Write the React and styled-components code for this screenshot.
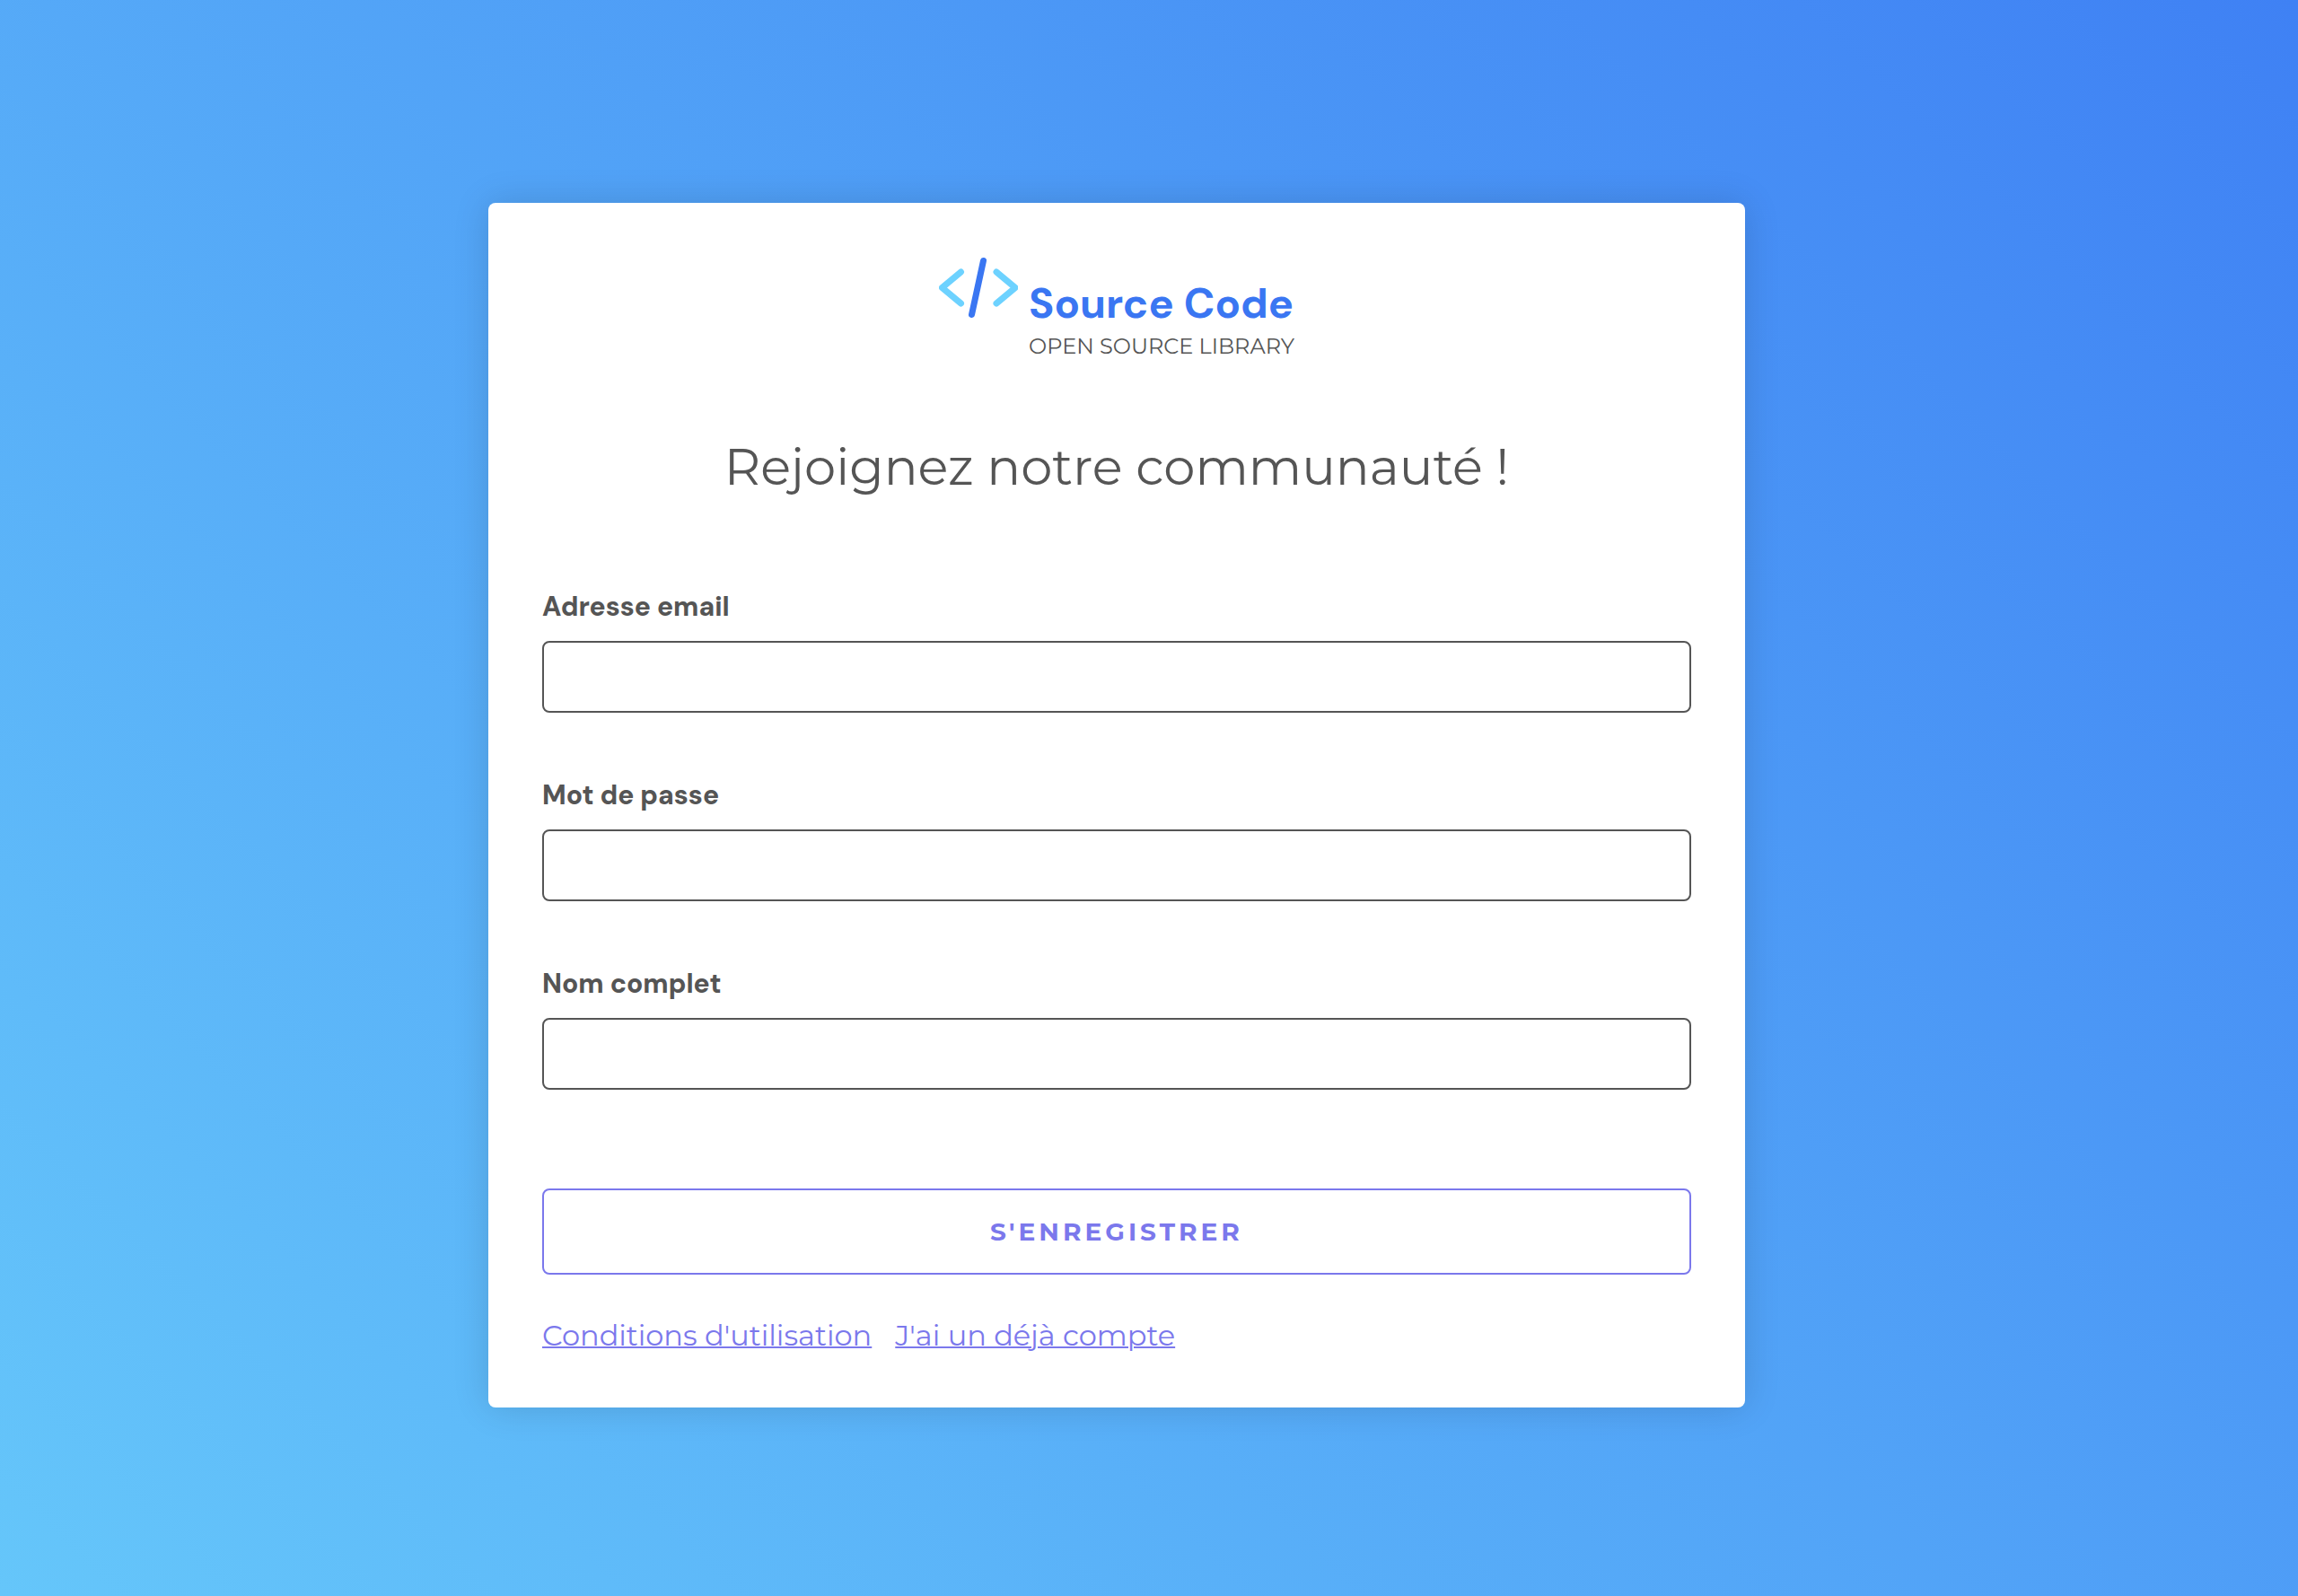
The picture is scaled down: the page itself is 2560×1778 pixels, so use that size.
import React, { useId } from "react";
import styled, { createGlobalStyle } from "styled-components";

const ink = "#555555";
const violet = "#7b78ec";
const blue = "#3a76f2";
const sky = "#6dd2ff";
const displayFont = `"Circular Std", "DM Sans", Inter, sans-serif`;

const GlobalStyle = createGlobalStyle`
  *, *::before, *::after { box-sizing: border-box; }
  body {
    margin: 0;
    color: ${ink};
    font-family: Montserrat, Inter, sans-serif;
  }
`;

const Page = styled.main`
  display: flex;
  justify-content: center;
  align-items: flex-start;
  min-height: 100vh;
  padding: 226px 72px 72px 0;
  background: linear-gradient(45deg, #65c6fa, #3f81f4);
`;

const Card = styled.section`
  width: 100%;
  max-width: 1400px;
  padding: 60px;
  border-radius: 8px;
  background: #ffffff;
  box-shadow: 0 0 40px rgba(0, 0, 0, 0.14);
`;

const Logo = styled.div`
  display: flex;
  justify-content: center;
  align-items: flex-start;
  gap: 12px;
`;

const LogoMark = styled.svg`
  flex: none;
  width: 88px;
  height: 70px;
`;

const LogoText = styled.div`
  display: flex;
  flex-direction: column;
  padding-top: 22px;
`;

const LogoName = styled.span`
  color: ${blue};
  font-family: ${displayFont};
  font-size: 47px;
  font-weight: 700;
  line-height: 60px;
`;

const LogoTagline = styled.span`
  font-size: 24px;
  font-weight: 400;
  line-height: 36px;
`;

const Title = styled.h1`
  margin: 74px 0 0;
  font-size: 56px;
  font-weight: 400;
  line-height: 84px;
  text-align: center;
`;

const Form = styled.form`
  display: flex;
  flex-direction: column;
  gap: 72px;
  margin-top: 94px;
`;

const FieldBox = styled.div`
  display: flex;
  flex-direction: column;
  gap: 18px;
`;

const Label = styled.label`
  font-family: ${displayFont};
  font-size: 30px;
  font-weight: 800;
  line-height: 40px;
`;

const Input = styled.input`
  width: 100%;
  height: 80px;
  padding: 0 20px;
  border: 2px solid ${ink};
  border-radius: 8px;
  background: #ffffff;
  color: inherit;
  font: inherit;
  font-size: 32px;
`;

const Submit = styled.button`
  height: 96px;
  margin-top: 38px;
  border: 2px solid ${violet};
  border-radius: 8px;
  background: #ffffff;
  color: ${violet};
  font-family: inherit;
  font-size: 28px;
  font-weight: 700;
  letter-spacing: 4px;
  text-transform: uppercase;
  cursor: pointer;
`;

const Links = styled.nav`
  display: flex;
  flex-wrap: wrap;
  gap: 26px;
  margin-top: 48px;
`;

const TextLink = styled.a`
  color: ${violet};
  font-size: 32px;
  line-height: 40px;
  text-decoration-thickness: 2px;
`;

function Field({ label, type }) {
  const id = useId();
  return (
    <FieldBox>
      <Label htmlFor={id}>{label}</Label>
      <Input id={id} type={type} />
    </FieldBox>
  );
}

export default function App() {
  return (
    <>
      <GlobalStyle />
      <Page>
        <Card>
          <Logo>
            <LogoMark viewBox="0 0 88 70" fill="none" strokeWidth="7" strokeLinecap="round" strokeLinejoin="round" aria-hidden="true">
              <path d="M24.500 17 3.500 34.500l21 17.500M64 17l21 17.500L64 52" stroke={sky} />
              <path d="M49.500 4.500 36.500 64.500" stroke={blue} />
            </LogoMark>
            <LogoText>
              <LogoName>Source Code</LogoName>
              <LogoTagline>OPEN SOURCE LIBRARY</LogoTagline>
            </LogoText>
          </Logo>
          <Title>Rejoignez notre communauté !</Title>
          <Form onSubmit={(event) => event.preventDefault()}>
            <Field label="Adresse email" type="email" />
            <Field label="Mot de passe" type="password" />
            <Field label="Nom complet" type="text" />
            <Submit type="submit">S'enregistrer</Submit>
          </Form>
          <Links>
            <TextLink href="#conditions">Conditions d'utilisation</TextLink>
            <TextLink href="#connexion">J'ai un déjà compte</TextLink>
          </Links>
        </Card>
      </Page>
    </>
  );
}
